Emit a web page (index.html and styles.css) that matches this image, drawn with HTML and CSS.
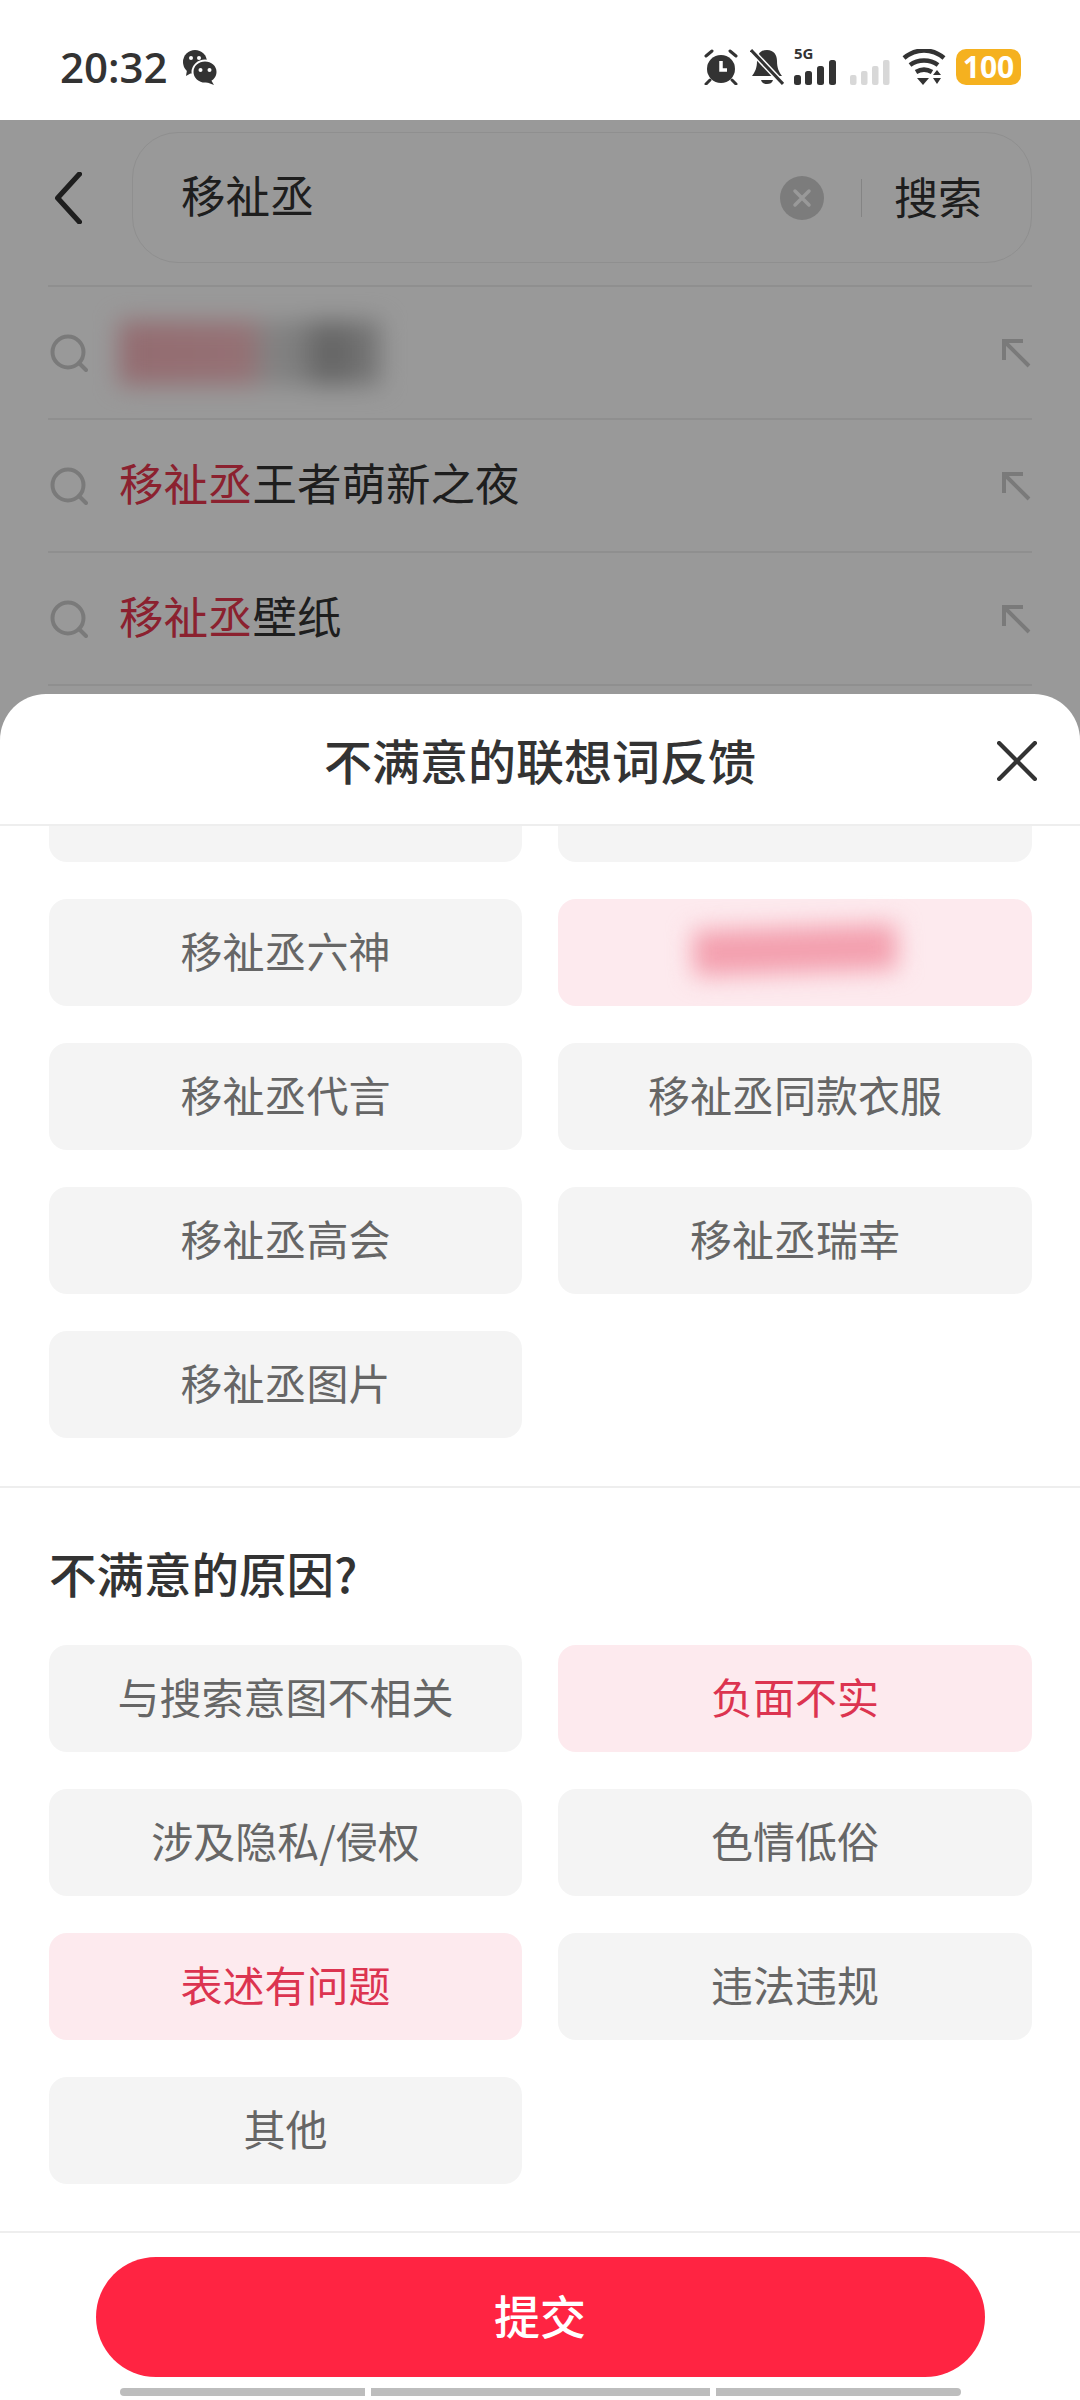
FILE: index.html
```html
<!DOCTYPE html>
<html lang="zh">
<head>
<meta charset="utf-8">
<title>不满意的联想词反馈</title>
<link rel="stylesheet" href="styles.css">
</head>
<body>
<div class="page">
  <main class="behind">
    <div class="search-bar">
      <svg class="back" viewBox="0 0 26 50"><path d="M24 2 3 25l21 23" fill="none" stroke="#333" stroke-width="5" stroke-linecap="round" stroke-linejoin="round"/></svg>
      <div class="search-box">
        <span class="query">移祉丞</span>
        <svg class="clear" viewBox="0 0 44 44"><circle cx="22" cy="22" r="22" fill="#cfcfcf"/><path d="m15 15 14 14m0-14L15 29" stroke="#fff" stroke-width="3.5" stroke-linecap="round"/></svg>
        <span class="sep"></span>
        <span class="search-go">搜索</span>
      </div>
    </div>
    <ul class="suggest">
      <li class="row">
        <svg class="glass" viewBox="0 0 38 38"><circle cx="18" cy="18" r="15.5" fill="none" stroke="#ccc" stroke-width="4"/><path d="m29 29 7 7" stroke="#ccc" stroke-width="4" stroke-linecap="round"/></svg>
        <span class="smear smear-row"></span>
        <svg class="fill-up" viewBox="0 0 30 30"><path d="M3 22V3h19M3 3l25 25" fill="none" stroke="#ccc" stroke-width="4"/></svg>
      </li>
      <li class="row">
        <svg class="glass" viewBox="0 0 38 38"><circle cx="18" cy="18" r="15.5" fill="none" stroke="#ccc" stroke-width="4"/><path d="m29 29 7 7" stroke="#ccc" stroke-width="4" stroke-linecap="round"/></svg>
        <span class="row-text"><em>移祉丞</em>王者萌新之夜</span>
        <svg class="fill-up" viewBox="0 0 30 30"><path d="M3 22V3h19M3 3l25 25" fill="none" stroke="#ccc" stroke-width="4"/></svg>
      </li>
      <li class="row">
        <svg class="glass" viewBox="0 0 38 38"><circle cx="18" cy="18" r="15.5" fill="none" stroke="#ccc" stroke-width="4"/><path d="m29 29 7 7" stroke="#ccc" stroke-width="4" stroke-linecap="round"/></svg>
        <span class="row-text"><em>移祉丞</em>壁纸</span>
        <svg class="fill-up" viewBox="0 0 30 30"><path d="M3 22V3h19M3 3l25 25" fill="none" stroke="#ccc" stroke-width="4"/></svg>
      </li>
    </ul>
  </main>

  <div class="dim"></div>

  <header class="status">
    <div class="status-left">
      <span class="time">20:32</span>
      <svg class="wechat" viewBox="0 0 36 36"><ellipse cx="13" cy="13" rx="12" ry="12" fill="#333"/><path d="m5 21-1 6 7-4z" fill="#333"/><ellipse cx="23" cy="23" rx="12.5" ry="11.5" fill="#333" stroke="#fff" stroke-width="2"/><path d="m29 31 3 5-8-3z" fill="#333"/><circle cx="9" cy="9" r="2" fill="#fff"/><circle cx="17" cy="9" r="2" fill="#fff"/><circle cx="18.500" cy="21" r="2" fill="#fff"/><circle cx="27.500" cy="21" r="2" fill="#fff"/></svg>
    </div>
    <div class="status-right">
      <svg class="ic-alarm" viewBox="0 0 36 36"><circle cx="18" cy="20" r="14" fill="#333"/><path d="M3 7l6-5M33 7l-6-5M7 31l-4 4M29 31l4 4" stroke="#333" stroke-width="3" stroke-linecap="round"/><path d="M18 12v9h6" fill="none" stroke="#fff" stroke-width="3.500"/></svg>
      <svg class="ic-bell" viewBox="0 0 34 36"><path d="M17 1c-7 0-10 5-10 11 0 7-2 11-5 15h30c-3-4-5-8-5-15C27 6 24 1 17 1z" fill="#333"/><path d="M11 31h12c-1 3-3 4-6 4s-5-1-6-4z" fill="#333"/><path d="M1 1l32 34" stroke="#fff" stroke-width="6"/><path d="M1 1l32 34" stroke="#333" stroke-width="3"/></svg>
      <div class="sim">
        <span class="sim-label">5G</span>
        <svg class="ic-bars-5g" viewBox="0 0 42 25"><rect x="0" y="15" width="7" height="10" rx="2.500" fill="#333"/><rect x="11" y="11" width="7" height="14" rx="2.500" fill="#333"/><rect x="23" y="6" width="7" height="19" rx="2.500" fill="#333"/><rect x="35" y="0" width="7" height="25" rx="2.500" fill="#333"/></svg>
      </div>
      <svg class="ic-bars" viewBox="0 0 40 25"><rect x="0" y="15" width="6.500" height="10" rx="2" fill="#d8d8d8"/><rect x="11" y="11" width="6.500" height="14" rx="2" fill="#d8d8d8"/><rect x="22" y="6" width="6.500" height="19" rx="2" fill="#d8d8d8"/><rect x="33" y="0" width="6.500" height="25" rx="2" fill="#d8d8d8"/></svg>
      <svg class="ic-wifi" viewBox="0 0 44 36"><path d="M2 9c12-10 28-10 40 0" fill="none" stroke="#333" stroke-width="4.500"/><path d="M8 16c8-6 20-6 28 0" fill="none" stroke="#333" stroke-width="4.500"/><path d="M14 23c5-3 11-3 16 0" fill="none" stroke="#333" stroke-width="4.500"/><path d="M15 29h12l-6 7z" fill="#333"/><path d="M31 26l4-5 4 5zM31 29h8l-4 6z" fill="#333"/></svg>
      <div class="battery">100</div>
    </div>
  </header>

  <section class="sheet">
    <div class="sheet-head">
      <h1 class="sheet-title">不满意的联想词反馈</h1>
      <svg class="close" viewBox="0 0 38 38"><path d="m2 2 34 34m0-34L2 36" stroke="#333" stroke-width="4" stroke-linecap="round"/></svg>
    </div>
    <div class="chip-grid words">
      <div class="chip cut"></div>
      <div class="chip cut"></div>
      <div class="chip">移祉丞六神</div>
      <div class="chip on"><span class="smear smear-chip"></span></div>
      <div class="chip">移祉丞代言</div>
      <div class="chip">移祉丞同款衣服</div>
      <div class="chip">移祉丞高会</div>
      <div class="chip">移祉丞瑞幸</div>
      <div class="chip">移祉丞图片</div>
    </div>
    <div class="reasons">
      <h2 class="reason-title">不满意的原因?</h2>
      <div class="chip-grid">
        <div class="chip">与搜索意图不相关</div>
        <div class="chip on">负面不实</div>
        <div class="chip">涉及隐私/侵权</div>
        <div class="chip">色情低俗</div>
        <div class="chip on">表述有问题</div>
        <div class="chip">违法违规</div>
        <div class="chip">其他</div>
      </div>
    </div>
    <div class="foot">
      <button class="submit">提交</button>
      <div class="home-bars">
        <span class="bar b1"></span><span class="bar b2"></span><span class="bar b3"></span>
      </div>
    </div>
  </section>
</div>
</body>
</html>
```

FILE: styles.css
```css
* { box-sizing: border-box; }
html, body { margin: 0; padding: 0; background: #fff; }
body { font-family: "Noto Sans CJK SC", "Noto Sans", sans-serif; }
.page { position: relative; width: 1080px; height: 2400px; overflow: hidden; background: #fff; }

/* page behind the sheet */
.behind { padding-top: 120px; }
.search-bar { display: flex; align-items: center; height: 165px; padding: 12px 48px 22px 54px; border: 0; }
.back { width: 28px; height: 52px; flex: none; margin-right: 50px; }
.search-box { flex: 1; height: 131px; display: flex; align-items: center; padding: 0 49px 0 48px; border: 1px solid #eee; border-radius: 46px; }
.query { flex: 1; font-size: 44.500px; color: #333; line-height: 1; padding-bottom: 6px; }
.clear { width: 44px; height: 44px; margin-right: 1px; }
.sep { width: 1px; height: 38px; background: #ddd; margin: 0 32px 0 36px; }
.search-go { font-size: 44px; color: #333; line-height: 1; padding-bottom: 4px; }
.suggest { list-style: none; margin: 0 48px; padding: 0; border-top: 2px solid #eee; }
.row { height: 133px; display: flex; align-items: center; border-bottom: 2px solid #eee; gap: 31px; padding-left: 2px; }
.glass { width: 38px; height: 38px; flex: none; }
.row-text { flex: 1; font-size: 44.500px; color: #333; line-height: 1; padding-bottom: 6px; }
.row-text em { font-style: normal; color: #e8384f; }
.fill-up { width: 30px; height: 30px; flex: none; margin-left: auto; margin-right: 1px; }
.smear { display: block; }
.smear-row { width: 262px; height: 64px; filter: blur(12px); background: linear-gradient(90deg, #f6b4bc 0, #f8bcc2 50%, #dcdcdc 56%, #d0d0d0 70%, #a4a4a4 78%, #c8c8c8 100%); }
.dim { position: absolute; inset: 0; background: rgba(0, 0, 0, .4); }

/* status bar */
.status { position: absolute; top: 0; left: 0; width: 100%; height: 120px; background: #fff; display: flex; justify-content: space-between; align-items: center; padding: 26px 59px 12px 60px; }
.status-left { display: flex; align-items: center; gap: 14px; }
.time { font-family: "Open Sans", sans-serif; font-size: 42px; font-weight: 600; color: #333; line-height: 1; }
.wechat { width: 36px; height: 36px; }
.status-right { display: flex; align-items: center; }
.ic-alarm { width: 36px; height: 36px; margin-right: 11px; }
.ic-bell { width: 34px; height: 36px; margin-right: 10px; }
.sim { position: relative; width: 42px; height: 36px; margin-right: 14px; }
.sim-label { position: absolute; top: -3px; left: 0; font-family: "Open Sans", sans-serif; font-size: 15px; font-weight: 700; color: #333; line-height: 1; }
.ic-bars-5g { position: absolute; bottom: 0; left: 0; width: 42px; height: 25px; }
.ic-bars { width: 40px; height: 25px; margin-top: 11px; margin-right: 12px; }
.ic-wifi { width: 44px; height: 36px; margin-right: 10px; }
.battery { width: 65px; height: 36px; border-radius: 10px; background: #f5b11f; color: #fff; font-family: "Open Sans", sans-serif; font-size: 30px; font-weight: 700; line-height: 36px; text-align: center; }

/* sheet */
.sheet { position: absolute; left: 0; right: 0; top: 694px; bottom: 0; background: #fff; border-radius: 46px 46px 0 0; display: flex; flex-direction: column; }
.sheet-head { position: relative; height: 132px; flex: none; display: flex; align-items: center; justify-content: center; border-bottom: 2px solid #eee; }
.sheet-title { margin: 0; font-size: 48px; font-weight: 500; color: #333; line-height: 1; }
.close { position: absolute; right: 43px; top: 47px; width: 40px; height: 40px; }
.chip-grid { display: grid; grid-template-columns: 473px 474px; column-gap: 36px; row-gap: 37px; padding: 0 49px; grid-auto-rows: 107px; }
.words { grid-template-rows: 36px; }
.chip { display: flex; align-items: center; justify-content: center; background: #f4f4f4; border-radius: 18px; font-size: 42px; color: #666; line-height: 1; padding-bottom: 6px; }
.chip.cut { border-radius: 0 0 18px 18px; }
.chip.on { background: #fdeaee; color: #dc3450; }
.smear-chip { width: 204px; height: 46px; filter: blur(12px); background: #f39fae; transform: rotate(-2deg); }
.reasons { margin-top: 48px; border-top: 2px solid #eee; padding-top: 56px; height: 747px; flex: none; border-bottom: 2px solid #eee; }
.reason-title { margin: 0 0 44px 49px; font-size: 47.500px; font-weight: 500; color: #333; line-height: 1.2; }
.foot { flex: 1; padding-top: 24px; display: flex; flex-direction: column; align-items: center; }
.submit { width: 889px; height: 120px; border: 0; border-radius: 60px; background: #ff2442; color: #fff; font-family: inherit; font-size: 46px; font-weight: 500; line-height: 1; padding: 0 0 6px; }
.home-bars { display: flex; gap: 6px; margin-top: 11px; }
.bar { height: 8px; background: #bdbdbd; }
.b1 { width: 245px; border-radius: 4px 0 0 4px; }
.b2 { width: 339px; }
.b3 { width: 245px; border-radius: 0 4px 4px 0; }
```
